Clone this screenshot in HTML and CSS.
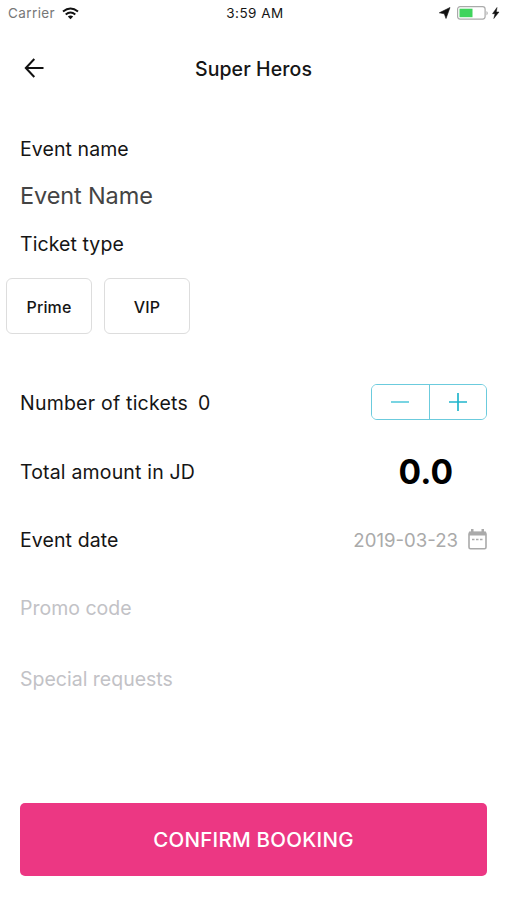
FILE: index.html
```html
<!DOCTYPE html>
<html lang="en">
<head>
<meta charset="utf-8">
<title>Super Heros</title>
<link rel="stylesheet" href="styles.css">
</head>
<body>
<header class="status">
  <div class="carrier"><span class="carrier-name">Carrier</span>
    <svg width="17" height="13" viewBox="0 0 17 13"><g fill="none" stroke="#111" stroke-width="2"><path d="M1 4.500Q8.500-1.500 16 4.500"/><path d="M3.700 7.500Q8.500 3.500 13.300 7.500"/></g><path d="M5.800 9.500Q8.500 7.500 11.200 9.500L8.500 12.300Z" fill="#111"/></svg>
  </div>
  <span class="clock">3:59 AM</span>
  <div class="power">
    <svg width="62" height="16" viewBox="0 0 62 16"><path d="M11 2.500L.3 7.800 5.300 8.800 7 13.500Z" fill="#111" stroke="#111" stroke-width=".6"/><rect x="18.600" y="1.600" width="27.500" height="12.500" rx="2.500" fill="#fff" stroke="#aaa" stroke-width="1.200"/><path d="M47.500 6q2.500 2 0 4.500Z" fill="#aaa"/><rect x="20.500" y="3.700" width="13" height="8.500" fill="#3fd45c"/><path d="M58 2.500L53.500 8.700H56L54.800 13.500 60 7H57.300Z" fill="#111" stroke="#111" stroke-width=".5"/></svg>
  </div>
</header>
<nav class="nav">
  <svg class="back" width="20" height="20" viewBox="0 0 20 20" fill="none" stroke="#111" stroke-width="2"><path d="M10.300 1L1.800 10l8.500 9M1.800 10H19.500"/></svg>
  <h1 class="title">Super Heros</h1>
</nav>
<main class="form">
  <div class="label"><span>Event name</span></div>
  <div class="value"><span>Event Name</span></div>
  <div class="label"><span>Ticket type</span></div>
  <div class="types"><button class="type">Prime</button><button class="type">VIP</button></div>
  <div class="row"><span class="tickets">Number of tickets</span><span class="count">0</span>
    <div class="stepper">
      <button class="step"><svg width="20" height="20" viewBox="0 0 20 20" stroke="#4cc6d8" stroke-width="1.500"><path d="M1 10H19"/></svg></button>
      <button class="step"><svg width="20" height="20" viewBox="0 0 20 20" stroke="#22b5cc" stroke-width="1.700"><path d="M1 10H19M10 1V19"/></svg></button>
    </div>
  </div>
  <div class="row"><span class="total">Total amount in JD</span><strong class="amount">0.0</strong></div>
  <div class="row"><span class="event-date">Event date</span><span class="date">2019-03-23</span>
    <svg class="calendar" width="19" height="21" viewBox="0 0 19 21"><rect x="1" y="3.500" width="17" height="16.300" rx="1.500" fill="#fff" stroke="#aaa" stroke-width="1.600"/><path d="M1 2.500H18V6.500H1ZM3 0h2.500v4H3ZM13.500 0H16v4h-2.500Z" fill="#aaa"/><path d="M4 10.500H15" stroke="#aaa" stroke-width="1.500" stroke-dasharray="2.500 1.500"/></svg>
  </div>
  <div class="row hint"><span>Promo code</span></div>
  <div class="row hint special"><span>Special requests</span></div>
  <button class="confirm"><span>CONFIRM BOOKING</span></button>
</main>
</body>
</html>
```
FILE: styles.css
```css
* { box-sizing: border-box; }
body { margin: 0; width: 506px; height: 900px; overflow: hidden; background: #fff; color: #151515; font: 400 19.5px/24px Inter, "Liberation Sans", sans-serif; }
button { font-family: inherit; background: #fff; color: inherit; padding: 0; }
span, strong { white-space: nowrap; }
svg { display: block; flex: none; }
.status { height: 26px; display: grid; grid-template-columns: 1fr auto 1fr; align-items: center; padding: 0 5px 0 8px; font-size: 13.500px; line-height: 16px; }
.carrier { display: flex; align-items: center; gap: 7px; }
.carrier-name { color: #777; letter-spacing: .4px; }
.clock { margin-left: 1px; letter-spacing: .5px; }
.power { display: flex; justify-content: flex-end; }
.nav { height: 84px; display: grid; grid-template-columns: 60px 1fr 60px; align-items: center; }
.back { margin-left: 24px; }
.title { margin: 2px 0 0 1px; text-align: center; font-size: 19.500px; font-weight: 500; letter-spacing: .1px; }
.form { padding: 27px 19px 0 20px; display: flex; flex-direction: column; }
.label { height: 24px; letter-spacing: .08px; }
.value { height: 24px; margin: 23px 0 24px; font-size: 23.500px; font-weight: 400; letter-spacing: -.12px; color: #444; }
.types { display: flex; gap: 12px; margin: 22px 0 35px -14px; }
.type { width: 86px; height: 56px; padding-top: 2px; border: 1px solid #ddd; border-radius: 6px; font-size: 16px; font-weight: 500; letter-spacing: .1px; }
.row { height: 68.500px; display: flex; align-items: center; }
.tickets { letter-spacing: .22px; }
.total { letter-spacing: .17px; }
.event-date { letter-spacing: .1px; }
.count { margin-left: 10px; }
.stepper { margin: -3px 0 0 auto; width: 116px; height: 36px; display: flex; border: 1.500px solid #6bcbdd; border-radius: 6px; overflow: hidden; }
.step { flex: 1; border: 0; display: flex; align-items: center; justify-content: center; }
.step + .step { border-left: 1.500px solid #6bcbdd; }
.amount { margin: 0 34px 0 auto; font-size: 33.500px; font-weight: 700; color: #000; }
.date { margin-left: auto; font-size: 18.600px; color: #aaa; }
.calendar { margin-left: 10px; margin-top: -1px; }
.hint { color: #c2c2c6; height: 67.500px; }
.special { height: 74px; }
.confirm { height: 73px; margin-top: 87px; border: 0; border-radius: 5px; background: #ec3783; color: #fff; font-size: 20.500px; font-weight: 500; letter-spacing: .25px; }
```
